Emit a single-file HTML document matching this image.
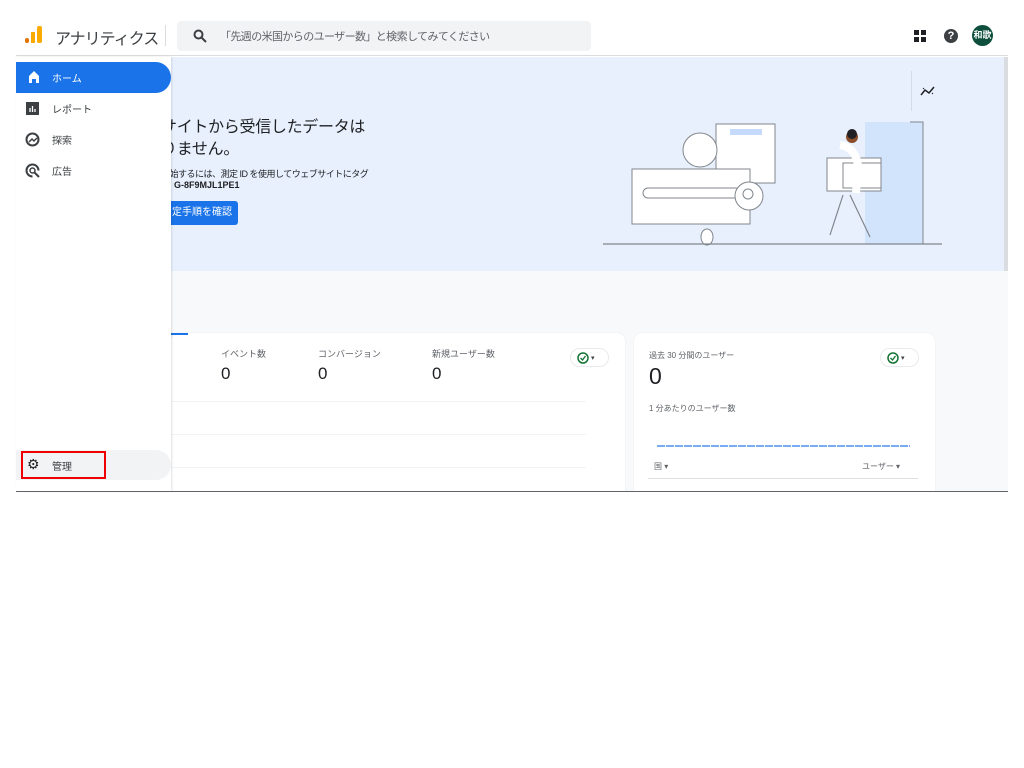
<!DOCTYPE html>
<html><head><meta charset="utf-8"><style>
*{margin:0;padding:0;box-sizing:border-box}
body{width:1024px;height:768px;background:#fff;font-family:"Liberation Sans","Noto Sans CJK JP",sans-serif;position:relative;overflow:hidden;color:#202124}
.a{position:absolute}
</style></head><body>
<!-- header -->
<div class="a" style="left:16px;top:0;width:992px;height:56px;background:#fff;border-bottom:1px solid #dadce0"></div>
<div class="a" style="left:25px;top:38px;width:4px;height:5px;background:#e37400;border-radius:2px"></div>
<div class="a" style="left:31px;top:32px;width:4px;height:11px;background:#f9ab00"></div>
<div class="a" style="left:37px;top:26px;width:5px;height:17px;background:#f9ab00;border-radius:2px"></div>
<div class="a" style="left:55px;top:25px;font-size:16px;color:#3c4043;letter-spacing:-1px">アナリティクス</div>
<div class="a" style="left:165px;top:25px;width:1px;height:21px;background:#dadce0"></div>
<div class="a" style="left:177px;top:21px;width:414px;height:30px;background:#f1f3f4;border-radius:4px"></div>
<svg class="a" style="left:193px;top:29px" width="14" height="14" viewBox="0 0 14 14"><circle cx="5.5" cy="5.5" r="4" fill="none" stroke="#3c4043" stroke-width="2"/><path d="M8.5 8.5L13 13" stroke="#3c4043" stroke-width="2"/></svg>
<div class="a" style="left:220px;top:28px;font-size:11px;color:#5f6368;letter-spacing:-.6px">「先週の米国からのユーザー数」と検索してみてください</div>
<svg class="a" style="left:914px;top:30px" width="12" height="12"><rect x="0" y="0" width="5" height="5" fill="#202124"/><rect x="7" y="0" width="5" height="5" fill="#202124"/><rect x="0" y="7" width="5" height="5" fill="#202124"/><rect x="7" y="7" width="5" height="5" fill="#202124"/></svg>
<div class="a" style="left:944px;top:29px;width:14px;height:14px;border-radius:50%;background:#3c4043;color:#fff;font-size:11px;font-weight:bold;text-align:center;line-height:14px">?</div>
<div class="a" style="left:972px;top:25px;width:21px;height:21px;border-radius:50%;background:#0d4f3c;color:#fff;font-size:9px;font-weight:bold;text-align:center;line-height:21px">和歌</div>
<!-- banner -->
<div class="a" style="left:171px;top:57px;width:833px;height:214px;background:#e8f0fe"></div>
<div class="a" style="left:1004px;top:57px;width:4px;height:214px;background:#dadce0"></div>
<div class="a" style="left:171px;top:271px;width:837px;height:220px;background:#f8f9fa"></div>
<div class="a" style="left:161px;top:117px;font-size:16px;line-height:22px;color:#202124;letter-spacing:-.3px">サイトから受信したデータは<br>りません。</div>
<div class="a" style="left:161px;top:167px;font-size:9px;color:#202124;letter-spacing:-.5px">開始するには、測定 ID を使用してウェブサイトにタグ</div>
<div class="a" style="left:174px;top:180px;font-size:9px;font-weight:bold;color:#202124">G-8F9MJL1PE1</div>
<div class="a" style="left:150px;top:201px;width:88px;height:24px;background:#1a73e8;border-radius:3px;color:#fff;font-size:10px;line-height:24px;padding-left:22px">定手順を確認</div>
<div class="a" style="left:911px;top:71px;width:1px;height:40px;background:#d5dbe5"></div>
<svg class="a" style="left:920px;top:85px" width="16" height="12"><path d="M1 10L5 5 9 8 14 2" fill="none" stroke="#202124" stroke-width="1.5"/><path d="M3 3l1 1M12 8l1 1" stroke="#202124"/></svg>
<svg class="a" style="left:600px;top:115px" width="350" height="135" viewBox="0 0 350 135">
<g fill="#fff" stroke="#80868b" stroke-width="1">
<rect x="116" y="9" width="59" height="59"/>
<rect x="130" y="14" width="32" height="6" fill="#c6dafc" stroke="none"/>
<circle cx="100" cy="35" r="17"/>
<rect x="32" y="54" width="118" height="55"/>
<rect x="43" y="73" width="98" height="10" rx="5"/>
<circle cx="149" cy="81" r="14"/>
<circle cx="148" cy="79" r="5"/>
<rect x="265" y="7" width="58" height="122" fill="#d2e3fc" stroke="none"/>
<path d="M310 7H323V129" fill="none"/>
<rect x="227" y="43" width="54" height="33"/>
<rect x="243" y="48" width="38" height="25"/>
<path d="M243 80L230 120 M250 80L270 122" stroke-width="1.2"/>
<ellipse cx="107" cy="122" rx="6" ry="8"/>
</g>
<path d="M240 30Q255 32 258 50L256 78" stroke="#fff" stroke-width="8" fill="none"/>
<circle cx="252" cy="22" r="6" fill="#8a4f2a"/>
<circle cx="252" cy="19" r="5" fill="#202124"/>
<path d="M3 129H342" stroke="#80868b" stroke-width="1.2"/>
</svg>
<!-- cards -->
<div class="a" style="left:171px;top:333px;width:454px;height:158px;background:#fff;border-radius:8px 8px 0 0;box-shadow:0 0 1px #dadce0"></div>
<div class="a" style="left:171px;top:333px;width:17px;height:2px;background:#1a73e8"></div>
<div class="a" style="left:221px;top:347px;font-size:9px;color:#5f6368">イベント数</div>
<div class="a" style="left:318px;top:347px;font-size:9px;color:#5f6368">コンバージョン</div>
<div class="a" style="left:432px;top:347px;font-size:9px;color:#5f6368">新規ユーザー数</div>
<div class="a" style="left:221px;top:364px;font-size:17px;color:#202124">0</div>
<div class="a" style="left:318px;top:364px;font-size:17px;color:#202124">0</div>
<div class="a" style="left:432px;top:364px;font-size:17px;color:#202124">0</div>
<div class="a" style="left:171px;top:401px;width:415px;height:1px;background:#f1f3f4"></div>
<div class="a" style="left:171px;top:434px;width:415px;height:1px;background:#f1f3f4"></div>
<div class="a" style="left:171px;top:467px;width:415px;height:1px;background:#f1f3f4"></div>
<div class="a" style="left:634px;top:333px;width:301px;height:158px;background:#fff;border-radius:8px 8px 0 0;box-shadow:0 0 1px #dadce0"></div>
<div class="a" style="left:649px;top:350px;font-size:8px;color:#5f6368">過去 30 分間のユーザー</div>
<div class="a" style="left:649px;top:363px;font-size:23px;color:#202124">0</div>
<div class="a" style="left:649px;top:403px;font-size:8px;color:#5f6368">1 分あたりのユーザー数</div>
<div class="a" style="left:657px;top:445px;width:253px;height:2px;background:repeating-linear-gradient(90deg,#7baaf7 0 8px,transparent 8px 9px)"></div>
<div class="a" style="left:654px;top:461px;font-size:8px;color:#5f6368">国 ▾</div>
<div class="a" style="left:862px;top:461px;font-size:8px;color:#5f6368">ユーザー ▾</div>
<div class="a" style="left:648px;top:478px;width:270px;height:1px;background:#e0e0e0"></div>
<div class="a" style="left:570px;top:348px;width:39px;height:19px;border-radius:10px;background:#fff;border:1px solid #e8eaed;font-size:7px;color:#3c4043;padding:3px 0 0 6px"><svg width="12" height="12" style="vertical-align:middle"><circle cx="6" cy="6" r="5" fill="none" stroke="#137333" stroke-width="1.5"/><path d="M3.5 6l2 2 3-4" fill="none" stroke="#137333" stroke-width="1.3"/></svg> ▾</div>
<div class="a" style="left:880px;top:348px;width:39px;height:19px;border-radius:10px;background:#fff;border:1px solid #e8eaed;font-size:7px;color:#3c4043;padding:3px 0 0 6px"><svg width="12" height="12" style="vertical-align:middle"><circle cx="6" cy="6" r="5" fill="none" stroke="#137333" stroke-width="1.5"/><path d="M3.5 6l2 2 3-4" fill="none" stroke="#137333" stroke-width="1.3"/></svg> ▾</div>
<!-- sidebar -->
<div class="a" style="left:16px;top:57px;width:155px;height:434px;background:#fff;box-shadow:1px 0 2px rgba(0,0,0,.12)"></div>
<div class="a" style="left:16px;top:62px;width:155px;height:31px;background:#1a73e8;border-radius:0 16px 16px 0"></div>
<svg class="a" style="left:27px;top:70px" width="14" height="14"><path d="M2 13V6L7 1 12 6V13H9V9H5V13Z" fill="#fff"/></svg>
<div class="a" style="left:52px;top:70px;font-size:10px;color:#fff">ホーム</div>
<svg class="a" style="left:26px;top:102px" width="13" height="13"><rect width="13" height="13" fill="#3c4043"/><path d="M4 10V6M6.5 10V4M9 10V7" stroke="#fff" stroke-width="1.3"/></svg>
<div class="a" style="left:52px;top:101px;font-size:10px;color:#3c4043">レポート</div>
<svg class="a" style="left:25px;top:132px" width="15" height="15"><circle cx="7.5" cy="7.5" r="6" fill="none" stroke="#3c4043" stroke-width="2"/><path d="M4 10l3-3 2 2 3-3" fill="none" stroke="#3c4043" stroke-width="1.5"/></svg>
<div class="a" style="left:52px;top:132px;font-size:10px;color:#3c4043">探索</div>
<svg class="a" style="left:25px;top:163px" width="15" height="15"><path d="M7.5 13.5A6 6 0 1 1 13.5 7.5" fill="none" stroke="#3c4043" stroke-width="2"/><circle cx="7.5" cy="7.5" r="2.5" fill="none" stroke="#3c4043" stroke-width="1.5"/><path d="M9 9l5 5" stroke="#3c4043" stroke-width="2"/></svg>
<div class="a" style="left:52px;top:163px;font-size:10px;color:#3c4043">広告</div>
<div class="a" style="left:16px;top:450px;width:155px;height:30px;background:#f1f3f4;border-radius:0 15px 15px 0"></div>
<div class="a" style="left:21px;top:451px;width:85px;height:28px;border:2px solid #e00"></div>
<div class="a" style="left:27px;top:457px;font-size:14px;line-height:14px;color:#202124">⚙</div>
<div class="a" style="left:52px;top:458px;font-size:10px;color:#3c4043">管理</div>
<div class="a" style="left:16px;top:491px;width:992px;height:1px;background:#5f6368"></div>
</body></html>
